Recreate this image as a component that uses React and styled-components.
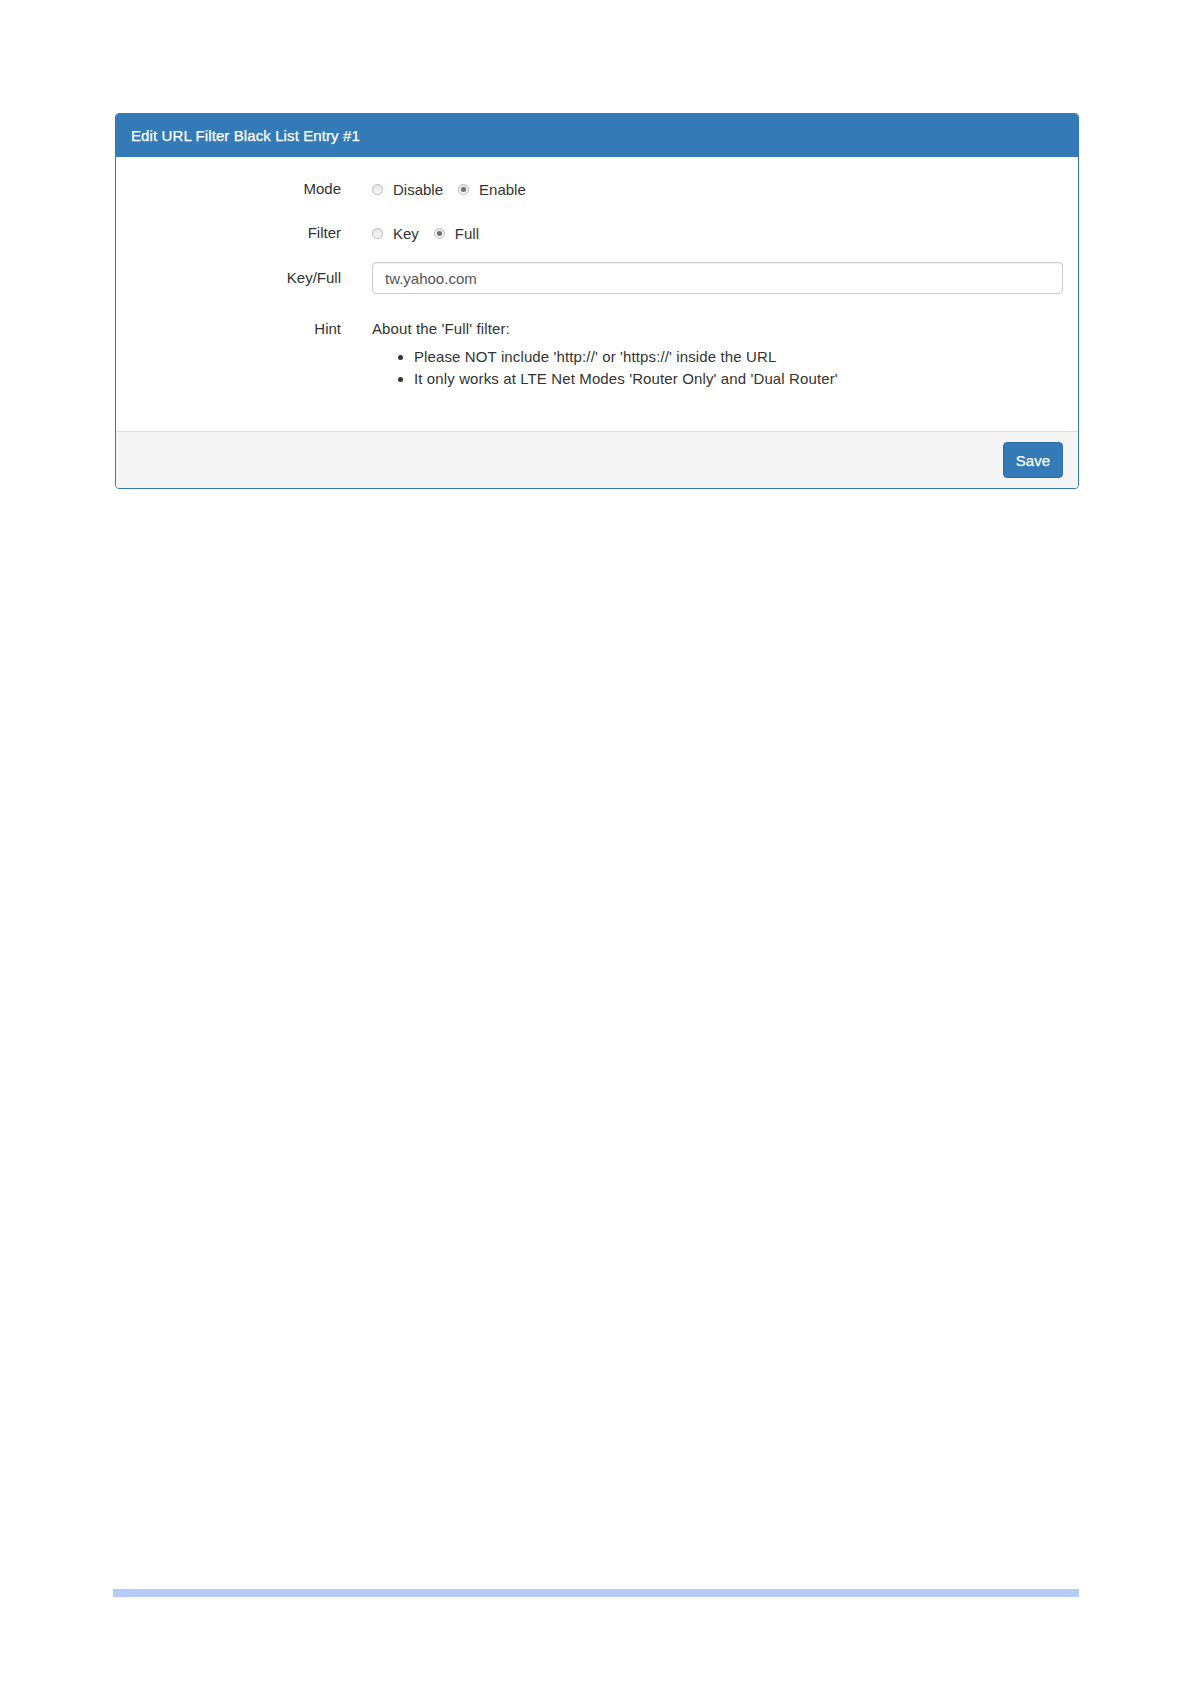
import React, { useState } from "react"
import styled, { createGlobalStyle } from "styled-components"

const GlobalStyle = createGlobalStyle`
  html, body {
    margin: 0;
    padding: 0;
    background: #fff;
  }
  body {
    font-family: "Liberation Sans", Arial, sans-serif;
    font-size: 15px;
    color: #333;
  }
`

const Page = styled.div`
  width: 1191px;
  min-height: 1684px;
  box-sizing: border-box;
  padding: 113px 112px 0 115px;
  display: flex;
  flex-direction: column;
`

const Panel = styled.div`
  width: 964px;
  box-sizing: border-box;
  border: 1px solid #337ab7;
  border-radius: 4px;
  overflow: hidden;
  background: #fff;
`

const Heading = styled.div`
  height: 43px;
  display: flex;
  align-items: center;
  padding: 0 15px;
  background: #337ab7;
  color: #fff;
  font-size: 15px;
  letter-spacing: 0.1px;
  -webkit-text-stroke: 0.25px #fff;
`

const Body = styled.div`
  display: grid;
  grid-template-columns: 210px 1fr;
  grid-template-rows: 34px 34px 36px auto;
  column-gap: 31px;
  row-gap: 10px;
  padding: 15px 15px 41px 15px;
`

const Label = styled.div`
  display: flex;
  align-items: ${p => (p.top ? "flex-start" : "center")};
  justify-content: flex-end;
  padding-top: ${p => (p.top ? "12px" : "0")};
  line-height: 22px;
  color: #333;
`

const Options = styled.div`
  display: flex;
  align-items: center;
`

const Option = styled.label`
  display: flex;
  align-items: center;
  margin-right: 15px;
  cursor: pointer;
  color: #333;
`

const Radio = styled.span`
  width: 9px;
  height: 9px;
  border-radius: 50%;
  border: 1px solid #b9b9b9;
  background: linear-gradient(#e6e6e6, #f8f8f8);
  margin-right: 10px;
  display: flex;
  align-items: center;
  justify-content: center;

  &::after {
    content: "";
    width: 5px;
    height: 5px;
    border-radius: 50%;
    background: ${p => (p.checked ? "#6f6f6f" : "transparent")};
  }
`

const Field = styled.div`
  display: flex;
  align-items: center;
`

const Input = styled.input`
  width: 100%;
  height: 32px;
  box-sizing: border-box;
  border: 1px solid #ccc;
  border-radius: 4px;
  padding: 0 12px;
  font-family: "Liberation Sans", Arial, sans-serif;
  font-size: 15px;
  color: #555;
  box-shadow: inset 0 1px 1px rgba(0, 0, 0, 0.06);
  outline: none;
`

const Hint = styled.div`
  padding-top: 12px;
  line-height: 22px;
  color: #333;
  letter-spacing: 0.12px;

  p {
    margin: 0 0 6px 0;
  }
`

const List = styled.ul`
  margin: 0;
  padding-left: 42px;
  list-style: disc;
`

const Footer = styled.div`
  display: flex;
  justify-content: flex-end;
  padding: 10px 15px;
  background: #f5f5f5;
  border-top: 1px solid #ddd;
`

const Button = styled.button`
  height: 36px;
  padding: 0 12px;
  border: 1px solid #2e6da4;
  border-radius: 4px;
  background: #337ab7;
  color: #fff;
  font-family: "Liberation Sans", Arial, sans-serif;
  font-size: 15px;
  -webkit-text-stroke: 0.25px #fff;
  cursor: pointer;
`

const Divider = styled.div`
  margin-top: 1100px;
  margin-left: -2px;
  width: 966px;
  height: 8px;
  background: #b3cdf8;
`

const RadioGroup = ({ options, value, onChange }) => (
  <Options>
    {options.map(opt => (
      <Option key={opt} onClick={() => onChange(opt)}>
        <Radio checked={value === opt} />
        {opt}
      </Option>
    ))}
  </Options>
)

const App = () => {
  const [mode, setMode] = useState("Enable")
  const [filter, setFilter] = useState("Full")
  const [url, setUrl] = useState("tw.yahoo.com")

  return (
    <>
      <GlobalStyle />
      <Page>
        <Panel>
          <Heading>Edit URL Filter Black List Entry #1</Heading>
          <Body>
            <Label>Mode</Label>
            <RadioGroup
              options={["Disable", "Enable"]}
              value={mode}
              onChange={setMode}
            />

            <Label>Filter</Label>
            <RadioGroup
              options={["Key", "Full"]}
              value={filter}
              onChange={setFilter}
            />

            <Label>Key/Full</Label>
            <Field>
              <Input value={url} onChange={e => setUrl(e.target.value)} />
            </Field>

            <Label top>Hint</Label>
            <Hint>
              <p>About the 'Full' filter:</p>
              <List>
                <li>Please NOT include 'http://' or 'https://' inside the URL</li>
                <li>It only works at LTE Net Modes 'Router Only' and 'Dual Router'</li>
              </List>
            </Hint>
          </Body>
          <Footer>
            <Button>Save</Button>
          </Footer>
        </Panel>
        <Divider />
      </Page>
    </>
  )
}

export default App
